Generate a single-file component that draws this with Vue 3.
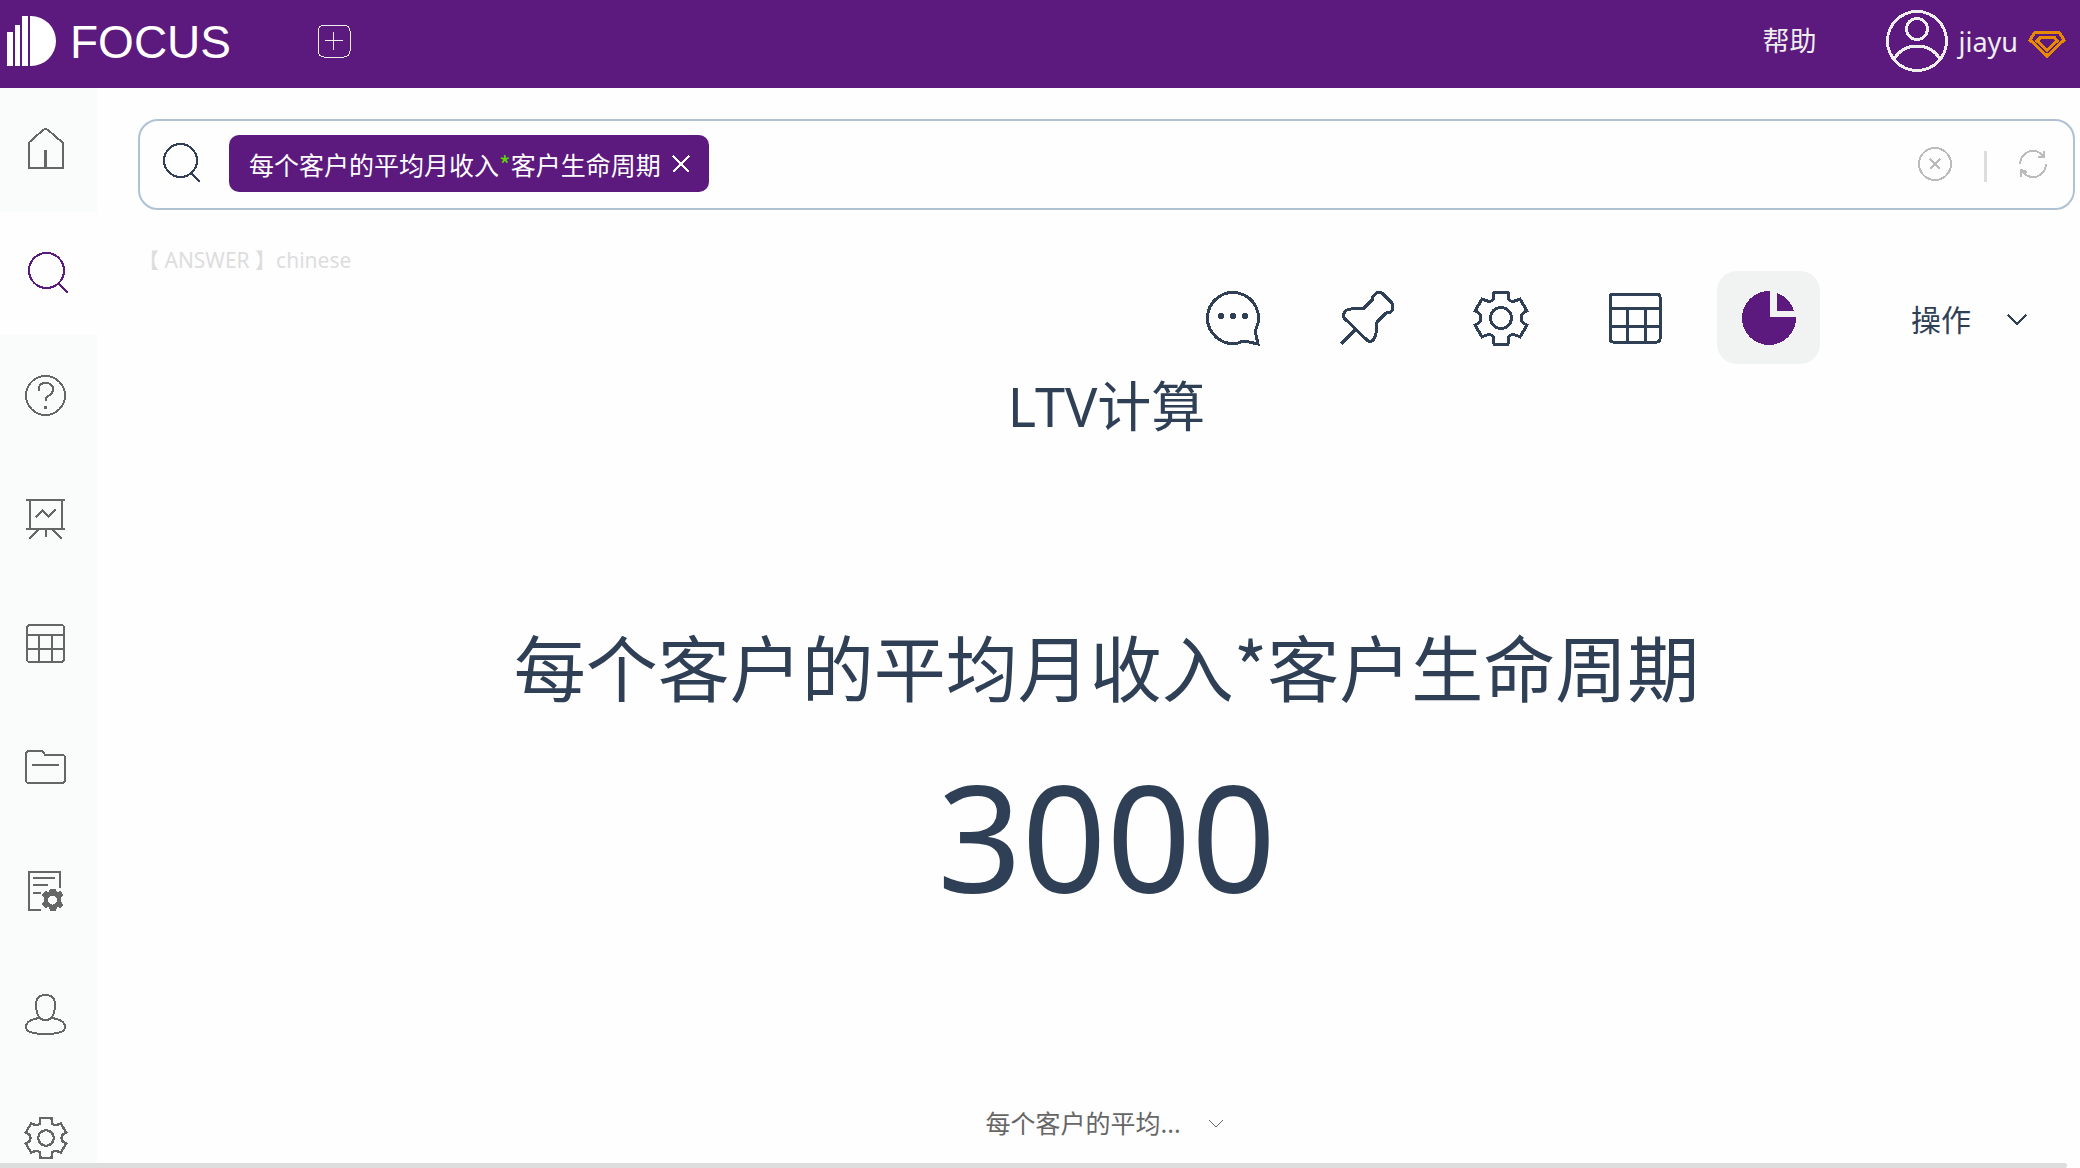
<script setup>
import { ref } from 'vue'

const gear =
  'M20 1H34L35 9Q39 12 46 8L53 20Q47 22 47 27Q47 32 53 34L46 46Q39 42 35 45L34 53H20L19 45Q15 42 8 46L1 34Q7 32 7 27Q7 22 1 20L8 8Q15 12 19 9Z'
const gearHole = 'M16.5 27a10.5 10.5 0 1 0 21 0a10.5 10.5 0 1 0-21 0Z'

const navItems = [
  { label: '首页', box: 42, line: 'M4 39.5V14.5L18 2Q20.5 0 23 2L37.5 14.5V39.5Z', bold: 'M20.5 22V39' },
  { label: '搜索', box: 42, active: true, line: 'M4 18.5a17.5 17.5 0 1 0 35 0a17.5 17.5 0 1 0-35 0ZM33 31L43 41' },
  {
    label: '问答',
    box: 42,
    line: 'M1 20.5a19.5 19.5 0 1 0 39 0a19.5 19.5 0 1 0-39 0ZM13.5 16Q13 8 20.5 8Q28 8 28 14.5Q28 18 24 20.5Q20.5 22.5 20.5 26',
    bold: 'M20.5 31V34'
  },
  {
    label: '看板',
    box: 42,
    line: 'M1 1H40M5 1V30M37 1V30M1 30H40M13 31L4 40M21 31V38M28 31L37 40M10.5 18.5L17.5 11.5L23.5 17.5L30.5 10.5'
  },
  {
    label: '数据表',
    box: 42,
    line: 'M5 2H36Q39 2 39 5V36Q39 39 36 39H5Q2 39 2 36V5Q2 2 5 2ZM2 12H39M2 26H39M14 12V39M27 12V39'
  },
  {
    label: '资源',
    box: 42,
    line: 'M1 8Q1 5 4 5H16Q18 5 19 7L20 9H37Q40 9 40 12V34Q40 37 37 37H4Q1 37 1 34ZM7 19H34'
  },
  {
    label: '任务',
    box: 42,
    line: 'M35 18V2H4V40H16M8 8H30M8 15H23M8 23H16',
    fill: 'M25 19H31L32 22L36 21L38 25L36 28V31L38 35L35 38L32 37L31 41H25L24 37L20 38L17 34L19 31V28L17 25L20 21L24 22ZM23 30a4.5 4.5 0 1 0 9 0a4.5 4.5 0 1 0-9 0Z'
  },
  {
    label: '用户',
    box: 42,
    line: 'M20.5 1Q30 1 30 10Q30 26 20.5 26Q11 26 11 10Q11 1 20.5 1ZM14 24Q1 26 1 33Q1 40 20.5 40Q40 40 40 33Q40 26 27 24'
  },
  { label: '设置', box: 54, wide: true, line: gear + 'M17 27a10 10 0 1 0 20 0a10 10 0 1 0-20 0Z' }
]

const tools = [
  {
    label: '评论',
    line: 'M52 53L50 44Q48 41 50 38A25.5 25.5 0 1 0 32 52Q38 49 43 51Z',
    fill: 'M12 25a3 3 0 1 0 6 0a3 3 0 1 0-6 0ZM24 25a3 3 0 1 0 6 0a3 3 0 1 0-6 0ZM36 25a3 3 0 1 0 6 0a3 3 0 1 0-6 0Z'
  },
  {
    label: '固定',
    line: 'M1 53L16 38M4 27L28 50Q31 52 34 48Q37 43 37 31L46 22Q50 22 52 20Q54 17 52 12L42 2Q38 0 35 3Q32 6 32 9L24 17Q13 17 7 19Q2 22 4 27Z'
  },
  { label: '配置', line: gear + gearHole },
  {
    label: '表格',
    line: 'M5 3H49Q52 3 52 6V48Q52 51 49 51H5Q2 51 2 48V6Q2 3 5 3ZM2 17H52M2 35H52M19 17V51M37 17V51'
  },
  { label: '图表', active: true, fill: 'M28 0A27 27 0 1 0 54 26H28ZM35 2A27 27 0 0 1 52 20H35Z' }
]

const query = ref('')
const measure = ref('每个客户的平均...')
</script>

<template>
  <div class="app">
    <header class="topbar">
      <a class="brand" href="#">
        <svg class="logo" viewBox="0 0 50 52" aria-hidden="true">
          <path d="M0 17H6V51H0ZM8 10H13V51H8ZM15 1H21V51H15ZM23 1H24A25 25 0 0 1 24 51H23Z" />
        </svg>
        <span>FOCUS</span>
      </a>
      <button class="add" type="button" aria-label="新建">
        <svg viewBox="0 0 34 34">
          <rect x="1" y="1" width="32" height="32" rx="6" />
          <path d="M8 16.5H26M16.5 8V26" />
        </svg>
      </button>
      <a class="help" href="#">帮助</a>
      <button class="account" type="button">
        <svg class="avatar" viewBox="0 0 62 62" aria-hidden="true">
          <circle cx="31" cy="31" r="29.5" />
          <circle cx="31" cy="19" r="10.5" />
          <path d="M8 49Q16 36 31 36Q46 36 54 49" />
        </svg>
        <span>jiayu</span>
        <svg class="gem" viewBox="0 0 38 28" aria-hidden="true">
          <path d="M7 2H31L36 10L19 26L2 10ZM13 7H26L29 11L19 20L9 11Z" />
        </svg>
      </button>
    </header>

    <div class="body">
      <nav class="side">
        <ul>
          <li v-for="item in navItems" :key="item.label" :class="{ active: item.active }">
            <a href="#" :aria-label="item.label">
              <svg :viewBox="`0 0 ${item.box} ${item.box}`">
                <path class="line" :class="{ bold: item.wide }" :d="item.line" />
                <path v-if="item.bold" class="bold" :d="item.bold" />
                <path v-if="item.fill" class="fill" :d="item.fill" />
              </svg>
            </a>
          </li>
        </ul>
      </nav>

      <main>
        <form class="search" @submit.prevent>
          <svg class="lens" viewBox="0 0 40 40" aria-hidden="true">
            <path d="M1 16.5a16.5 16.5 0 1 0 33 0a16.5 16.5 0 1 0-33 0ZM28 29L37 38" />
          </svg>
          <span class="token">
            <span>每个客户的平均月收入<b>*</b>客户生命周期</span>
            <button type="button" aria-label="移除">
              <svg viewBox="0 0 18 18"><path d="M1 1L17 17M17 1L1 17" /></svg>
            </button>
          </span>
          <input v-model="query" type="text" aria-label="搜索" />
          <button class="clear" type="button" aria-label="清空">
            <svg viewBox="0 0 34 34">
              <circle cx="17" cy="17" r="16" />
              <path d="M12 12L22 22M22 12L12 22" />
            </svg>
          </button>
          <span class="divider"></span>
          <button class="refresh" type="button" aria-label="刷新">
            <svg viewBox="0 0 28 28">
              <path d="M1 14A13 13 0 0 1 25 7M25 1V7H19M27 14A13 13 0 0 1 3 21M2 27V20L8 22" />
            </svg>
          </button>
        </form>

        <p class="source">【 ANSWER 】chinese</p>

        <div class="toolbar">
          <button
            v-for="tool in tools"
            :key="tool.label"
            type="button"
            class="tool"
            :class="{ active: tool.active }"
            :aria-label="tool.label"
          >
            <svg viewBox="0 0 54 54">
              <path v-if="tool.line" class="line" :d="tool.line" />
              <path v-if="tool.fill" class="fill" :d="tool.fill" />
            </svg>
          </button>
          <button class="actions" type="button" aria-haspopup="menu">
            <span>操作</span>
            <svg viewBox="0 0 20 11" aria-hidden="true"><path d="M1 1L10 10L19 1" /></svg>
          </button>
        </div>

        <section class="chart">
          <h1>LTV计算</h1>
          <h2>每个客户的平均月收入*客户生命周期</h2>
          <p class="value">3000</p>
          <label class="measure">
            <select v-model="measure" aria-label="指标">
              <option>每个客户的平均...</option>
            </select>
            <svg viewBox="0 0 16 9" aria-hidden="true"><path d="M1 1L8 8L15 1" /></svg>
          </label>
        </section>
      </main>
    </div>
    <div class="scrollbar"></div>
  </div>
</template>

<style>
body {
  margin: 0;
}
</style>

<style scoped>
.app {
  --purple: #5c197e;
  --ink: #2f4056;
  --gray: #666;
  display: flex;
  flex-direction: column;
  height: 100vh;
  overflow: hidden;
  background: #fefefe;
  color: var(--ink);
  font-family: "Noto Sans", "Noto Sans CJK SC", sans-serif;
}
button,
input,
select {
  margin: 0;
  padding: 0;
  border: 0;
  background: none;
  color: inherit;
  font: inherit;
}
a {
  color: inherit;
  text-decoration: none;
}
svg {
  display: block;
  flex: none;
  overflow: visible;
  fill: none;
  stroke: currentColor;
  stroke-width: 2;
  shape-rendering: crispEdges;
}
h1,
h2,
p,
ul {
  margin: 0;
  padding: 0;
  font-weight: 400;
}

.topbar {
  display: flex;
  flex: none;
  align-items: center;
  box-sizing: border-box;
  height: 88px;
  padding: 0 14px 6px 7px;
  background: var(--purple);
  color: #eee;
}
.brand {
  display: flex;
  align-items: center;
  gap: 13px;
  color: #fff;
  font-family: "Liberation Sans", Arial, sans-serif;
  font-size: 46px;
  line-height: 54px;
}
.brand span {
  padding-top: 2px;
}
.logo {
  width: 50px;
  height: 52px;
  fill: currentColor;
  stroke: none;
  shape-rendering: auto;
}
.add {
  margin-left: 86px;
}
.add svg {
  width: 34px;
  height: 34px;
  stroke-width: 1;
}
.help {
  margin-left: auto;
  font-size: 27px;
  line-height: 36px;
}
.account {
  display: flex;
  align-items: center;
  gap: 10px;
  margin-left: 70px;
  font-size: 27px;
}
.avatar {
  width: 62px;
  height: 62px;
  stroke-width: 3;
}
.gem {
  width: 38px;
  height: 28px;
  margin-top: 6px;
  color: #e88a00;
  stroke-width: 3;
}

.body {
  display: flex;
  flex: 1;
  min-height: 0;
}
.side {
  flex: none;
  width: 97px;
  background: #fafcfb;
  color: var(--gray);
}
.side ul {
  display: flex;
  flex-direction: column;
  height: calc(100% + 38px);
  list-style: none;
}
.side li {
  flex: 1;
}
.side li.active {
  background: #fefefe;
  color: var(--purple);
}
.side a {
  display: flex;
  align-items: center;
  justify-content: center;
  box-sizing: border-box;
  height: 100%;
  padding: 0 5px 2px 0;
}
.side svg {
  width: 42px;
  height: 42px;
}
.bold {
  stroke-width: 3;
}
.fill {
  fill: currentColor;
  fill-rule: evenodd;
  stroke: none;
}

main {
  display: flex;
  flex: 1;
  flex-direction: column;
  min-width: 0;
  padding: 31px 5px 0 41px;
}
.search {
  display: flex;
  flex: none;
  align-items: center;
  box-sizing: border-box;
  height: 91px;
  padding: 0 26px 2px 23px;
  border: 2px solid #b0c1d4;
  border-radius: 20px;
}
.lens {
  width: 40px;
  height: 40px;
}
.token {
  display: flex;
  align-items: center;
  gap: 11px;
  box-sizing: border-box;
  height: 57px;
  margin-left: 26px;
  padding: 0 19px 0 20px;
  border-radius: 10px;
  background: var(--purple);
  color: #fff;
  font-family: "Noto Sans CJK SC", sans-serif;
  font-size: 25px;
  white-space: nowrap;
}
.token b {
  color: #5bd800;
  font-weight: 400;
}
.token svg {
  width: 18px;
  height: 18px;
}
.search input {
  flex: 1;
  min-width: 0;
  height: 57px;
  margin: 0 20px;
  outline: 0;
  font-size: 25px;
}
.clear,
.refresh {
  color: #bbb;
}
.clear svg {
  width: 34px;
  height: 34px;
}
.divider {
  width: 3px;
  height: 31px;
  margin: 6px 32px 0;
  background: #ddd;
}
.refresh svg {
  width: 28px;
  height: 28px;
}
.source {
  margin-top: 39px;
  color: #ddd;
  font-size: 21px;
  line-height: 22px;
}

.toolbar {
  display: flex;
  flex: none;
  justify-content: flex-end;
  gap: 31px;
  padding-right: 48px;
}
.tool {
  display: flex;
  align-items: center;
  justify-content: center;
  width: 103px;
  height: 93px;
  padding-top: 1px;
  border-radius: 20px;
}
.tool svg {
  width: 54px;
  height: 54px;
  stroke-width: 3;
}
.tool.active {
  background: #f1f3f3;
  color: var(--purple);
}
.actions {
  display: flex;
  align-items: center;
  gap: 36px;
  margin-left: 60px;
  font-size: 30px;
}
.actions svg {
  width: 20px;
  height: 11px;
  margin-top: 3px;
}

.chart {
  display: flex;
  flex: 1;
  flex-direction: column;
  align-items: center;
}
.chart h1 {
  margin-top: 6px;
  font-size: 54px;
  line-height: 72px;
}
.chart h2 {
  margin-top: 175px;
  font-family: "Noto Sans CJK SC", sans-serif;
  font-size: 72px;
  line-height: 96px;
  white-space: nowrap;
}
.value {
  margin-top: 43px;
  font-size: 148px;
  line-height: 160px;
}
.measure {
  display: flex;
  align-items: center;
  gap: 20px;
  margin: auto 0 20px;
  padding-right: 4px;
  color: var(--gray);
  font-size: 25px;
}
.measure select {
  height: 40px;
  width: 202px;
  appearance: none;
}
.measure svg {
  width: 16px;
  height: 9px;
  stroke-width: 1;
}
.scrollbar {
  flex: none;
  height: 5px;
  margin-right: 13px;
  border-radius: 0 3px 3px 0;
  background: #ddd;
}
</style>
